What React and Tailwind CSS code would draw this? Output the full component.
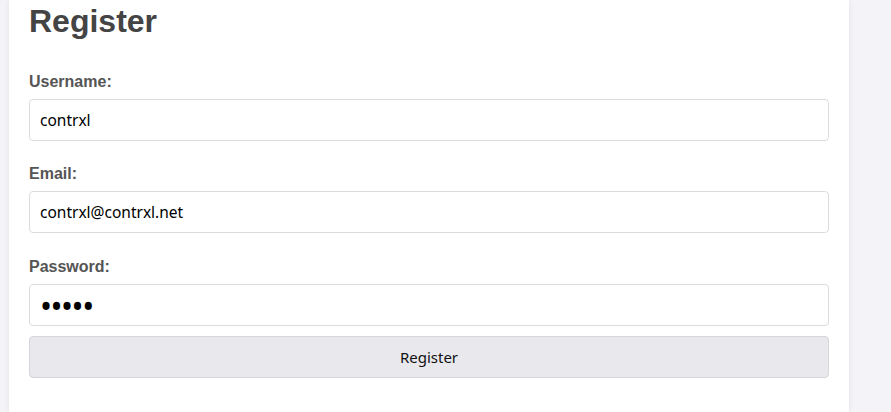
import { useState } from 'react';

function Field({ label, type = 'text', value, onChange, gap = 'mb-[24px]' }) {
  return (
    <div className={gap}>
      <label className="mb-[8px] block text-base font-bold leading-[18px] text-[#555]">{label}</label>
      <input
        type={type}
        value={value}
        onChange={(e) => onChange(e.target.value)}
        className={`block h-[42px] w-full rounded-[4px] border border-[#dcdcdc] bg-white px-[10px] text-black outline-none ${
          type === 'password' ? 'text-[32px] leading-none tracking-[-1.5px]' : 'text-[15.5px]'
        }`}
        style={{ fontFamily: '"Noto Sans", sans-serif' }}
      />
    </div>
  );
}

export default function App() {
  const [username, setUsername] = useState('contrxl');
  const [email, setEmail] = useState('contrxl@contrxl.net');
  const [password, setPassword] = useState('12345');

  return (
    <div className="min-h-[412px] bg-[#f4f3f8] pl-[9px] pr-[42px] font-['Liberation_Sans',Arial,sans-serif]">
      <div className="min-h-[412px] bg-white px-[20px] pt-[3px] shadow-[0_0_6px_rgba(0,0,0,0.08)]">
        <h1 className="mb-[34px] text-[32px] font-bold leading-[36px] text-[#444]">Register</h1>
        <form onSubmit={(e) => e.preventDefault()}>
          <Field label="Username:" value={username} onChange={setUsername} />
          <Field label="Email:" type="email" value={email} onChange={setEmail} gap="mb-[25px]" />
          <Field label="Password:" type="password" value={password} onChange={setPassword} gap="mb-[10px]" />
          <button
            type="submit"
            className="block h-[42px] w-full rounded-[4px] border border-[#d6d6da] bg-[#e9e9ed] text-[15px] text-[#111]"
            style={{ fontFamily: '"Noto Sans", sans-serif' }}
          >
            Register
          </button>
        </form>
      </div>
    </div>
  );
}
